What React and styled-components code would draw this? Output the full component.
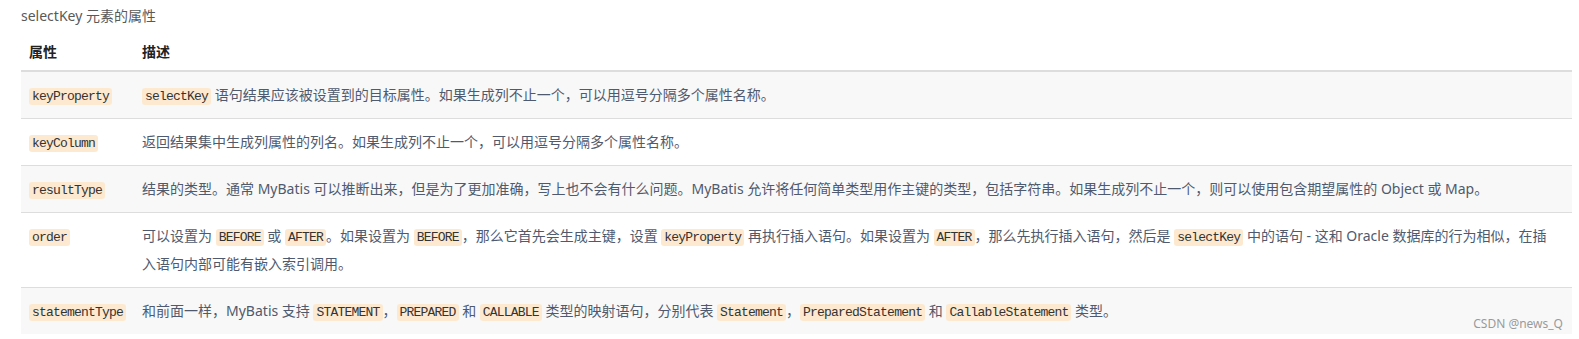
import React from 'react'
import styled, { createGlobalStyle } from 'styled-components';

const GlobalStyle = createGlobalStyle`
  body {
    margin: 0;
    background: #fff;
    font-family: "Noto Sans", "Noto Sans CJK SC", sans-serif;
  }
`;

const rows = [
  {
    name: 'keyProperty',
    desc: [['c', 'selectKey'], ' 语句结果应该被设置到的目标属性。如果生成列不止一个，可以用逗号分隔多个属性名称。'],
  },
  {
    name: 'keyColumn',
    desc: ['返回结果集中生成列属性的列名。如果生成列不止一个，可以用逗号分隔多个属性名称。'],
  },
  {
    name: 'resultType',
    desc: ['结果的类型。通常 MyBatis 可以推断出来，但是为了更加准确，写上也不会有什么问题。MyBatis 允许将任何简单类型用作主键的类型，包括字符串。如果生成列不止一个，则可以使用包含期望属性的 Object 或 Map。'],
  },
  {
    name: 'order',
    desc: [
      '可以设置为 ', ['c', 'BEFORE'], ' 或 ', ['c', 'AFTER'], '。如果设置为 ', ['c', 'BEFORE'],
      '，那么它首先会生成主键，设置 ', ['c', 'keyProperty'], ' 再执行插入语句。如果设置为 ', ['c', 'AFTER'],
      '，那么先执行插入语句，然后是 ', ['c', 'selectKey'], ' 中的语句 - 这和 Oracle 数据库的行为相似，在插入语句内部可能有嵌入索引调用。',
    ],
  },
  {
    name: 'statementType',
    desc: [
      '和前面一样，MyBatis 支持 ', ['c', 'STATEMENT'], '，', ['c', 'PREPARED'], ' 和 ', ['c', 'CALLABLE'],
      ' 类型的映射语句，分别代表 ', ['c', 'Statement'], '，', ['c', 'PreparedStatement'], ' 和 ',
      ['c', 'CallableStatement'], ' 类型。',
    ],
  },
];

function App() {
  return (
    <Page>
      <GlobalStyle />
      <Title>selectKey 元素的属性</Title>
      <Table>
        <thead>
          <tr>
            <Th $w={97}>属性</Th>
            <Th>描述</Th>
          </tr>
        </thead>
        <tbody>
          {rows.map((row, i) => (
            <Row key={row.name} $odd={i % 2 === 0}>
              <Td><Code>{row.name}</Code></Td>
              <Desc>
                {row.desc.map((part, j) =>
                  Array.isArray(part) ? <Code key={j}>{part[1]}</Code> : <span key={j}>{part}</span>
                )}
              </Desc>
            </Row>
          ))}
        </tbody>
      </Table>
      <Watermark>CSDN @news_Q</Watermark>
    </Page>
  )
}

export default App

const Page = styled.div`
  position: relative;
  width: 1579px;
  height: 339px;
  padding: 0 7px 0 21px;
  box-sizing: border-box;
  overflow: hidden;
`;

const Title = styled.div`
  padding-top: 4px;
  font-size: 14px;
  line-height: 24px;
  color: #595959;
`;

const Table = styled.table`
  margin-top: 6px;
  width: 100%;
  border-collapse: collapse;
  font-size: 14px;
`;

const Th = styled.th`
  width: ${p => (p.$w ? `${p.$w}px` : 'auto')};
  text-align: left;
  padding: 8px 8px;
  line-height: 20px;
  font-weight: 700;
  color: #222;
  border-bottom: 2px solid #dddddd;
`;

const Row = styled.tr`
  background: ${p => (p.$odd ? '#f8f8f8' : '#ffffff')};
  border-bottom: 1px solid #dddddd;
  &:last-child { border-bottom: none; }
`;

const Td = styled.td`
  padding: 9px 8px;
  line-height: 28px;
  vertical-align: top;
  white-space: nowrap;
`;

const Desc = styled(Td)`
  padding-right: 16px;
  white-space: normal;
  color: #4f5a6e;
`;

const Code = styled.code`
  font-family: "Liberation Mono", monospace;
  font-size: 13px;
  letter-spacing: -0.8px;
  line-height: 16px;
  color: #333;
  background: #fde9cf;
  border-radius: 3px;
  padding: 1px 3px;
`;

const Watermark = styled.div`
  position: absolute;
  right: 16px;
  bottom: 7px;
  font-size: 12px;
  color: #9a9a9a;
`;
